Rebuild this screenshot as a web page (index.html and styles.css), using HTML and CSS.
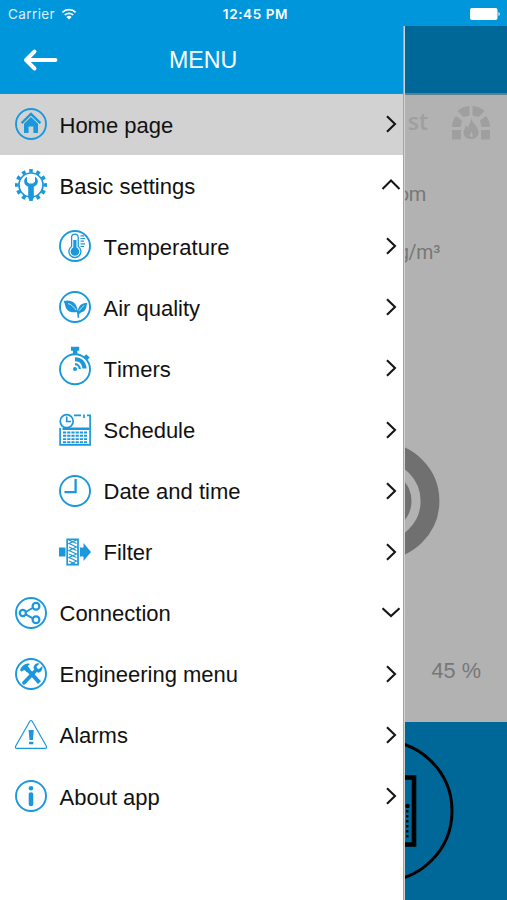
FILE: index.html
```html
<!DOCTYPE html>
<html lang="en">
<head>
<meta charset="utf-8">
<title>Menu</title>
<link rel="stylesheet" href="styles.css">
</head>
<body>
<svg class="defs" width="0" height="0">
  <symbol id="right" viewBox="0 0 20 20"><path d="M6 2.200 14 10 6 17.800"/></symbol>
  <symbol id="up" viewBox="0 0 20 20"><path d="M1.500 14 10 5.500 18.500 14"/></symbol>
  <symbol id="down" viewBox="0 0 20 20"><path d="M1.500 5.300 10 13 18.500 5.300"/></symbol>
</svg>
<header class="status">
  <span class="carrier">Carrier
    <svg width="16" height="12" viewBox="0 0 16 12"><path d="M1.400 4.400a9.400 9.400 0 0 1 13.200 0M3.800 7a6 6 0 0 1 8.400 0" fill="none" stroke="#fff" stroke-width="1.700"/><path d="M8 11.600 5.400 8.900a3.800 3.800 0 0 1 5.200 0z" fill="#fff"/></svg>
  </span>
  <span class="clock">12:45 PM</span>
  <svg class="battery" width="31" height="12" viewBox="0 0 31 12"><rect width="27.500" height="12" rx="2" fill="#fff"/><path d="M28.500 4a2.200 2.200 0 0 1 0 4z" fill="#fff"/></svg>
</header>
<div class="screen">
  <nav class="drawer">
    <div class="title">
      <svg class="back" width="36" height="24" viewBox="0 0 36 24"><path d="M11.500 3.500 3 12l8.500 8.500M3.500 12H32.500" fill="none" stroke="#fff" stroke-width="3.900" stroke-linecap="round" stroke-linejoin="round"/></svg>
      <h1>MENU</h1>
    </div>
    <ul class="menu">
      <li class="item active">
        <svg class="icon" viewBox="0 0 34 34"><circle class="ring" cx="17" cy="17" r="15"/><path class="line" d="m7.600 16.200 9.400-9.300 9.400 9.300" stroke-width="2.400"/><path class="solid" d="M10 16.800 17 10l7 6.800V26h-4.600v-6.400h-4.800V26H10z"/></svg>
        <span>Home page</span><svg class="arrow"><use href="#right"/></svg>
      </li>
      <li class="item">
        <svg class="icon" viewBox="0 0 34 34"><circle class="line" cx="17" cy="17" r="12" stroke-width="1.700"/><circle class="line" cx="17" cy="17" r="14.200" stroke-width="3.600" pathLength="120" stroke-dasharray="5 5" stroke-dashoffset="2.500"/><path class="solid" d="M13 8.800v5l2.200 1.800h3.600l2.200-1.800v-5c2.200 1.100 2.800 2.900 2.800 4.700 0 2.400-1.500 4.200-4 5.300v10.200a2.800 2.800 0 0 1-5.600 0V18.800c-2.500-1.100-4-2.900-4-5.300 0-1.800.6-3.600 2.800-4.700z"/></svg>
        <span>Basic settings</span><svg class="arrow"><use href="#up"/></svg>
      </li>
      <li class="item sub">
        <svg class="icon" viewBox="0 0 34 34"><circle class="ring" cx="17" cy="17" r="15"/><path class="line" d="M13.600 17.500V8.500a3.300 3.300 0 0 1 6.600 0v9a6 6 0 1 1-6.600 0z" stroke-width="1.300"/><circle class="solid" cx="16.900" cy="22.500" r="4.300"/><path class="solid" d="M15.300 11h3.200v10h-3.200z"/><path class="line" d="M22.500 6.800H26M22.500 9.500h4.500M22.500 12.200H26M22.500 14.900h4.500M22.500 17.500H26" stroke-width="1.200"/></svg>
        <span>Temperature</span><svg class="arrow"><use href="#right"/></svg>
      </li>
      <li class="item sub">
        <svg class="icon" viewBox="0 0 34 34"><circle class="ring" cx="17" cy="17" r="15"/><path class="solid" d="M5.500 11c7-2 14.200 1.400 14.200 11-6.700 1.300-11.200-1-12.400-6-.4-1.700-.8-3.500-1.800-5zM29.500 12.800c-1 1.800-.8 3.400-1.500 5.400-1 3.200-4 4.900-8 4.300-.2-6.200 3-9.700 9.500-9.700z"/><path class="line" d="M19 20.500c1 1.500 1.300 3.700 1.300 7.300M20.300 24l3.500-3.500" stroke-width="1.600"/><path d="M10 13.500c3.500 1 6 3.500 8.200 6.700M25.800 15.400 21 20.800" fill="none" stroke="#fff" stroke-width=".7"/></svg>
        <span>Air quality</span><svg class="arrow"><use href="#right"/></svg>
      </li>
      <li class="item sub">
        <svg class="icon tall" viewBox="0 0 34 40"><circle class="ring" cx="17" cy="23.200" r="15"/><path class="solid" d="M13 .8h8.200v4h-1.900v4h-4.400v-4H13z"/><path class="line" d="m27 9.500 3.500 3.300" stroke-width="3.500"/><circle class="solid" cx="17" cy="23" r="2"/><path class="line" d="M17 18.200a5 5 0 0 1 4.800 4.800" stroke-width="2.200"/><path class="solid" d="M17 11.200c6.500 0 11.300 4.500 11.600 11.300h-4.300c0-4.500-2.800-7.300-7.300-7.300z"/></svg>
        <span>Timers</span><svg class="arrow"><use href="#right"/></svg>
      </li>
      <li class="item sub">
        <svg class="icon" viewBox="0 0 34 34"><circle class="line" cx="8.700" cy="8.200" r="6.500" stroke-width="1.700"/><path class="line" d="M8.700 3.500v5H13M16 2.300h7M26 1.500v3.600M29 2.300h3.100v29.500H2.100V15" stroke-width="1.700"/><path class="solid" d="M4.500 14.500h27V17h-27z"/><path class="line" d="M5 19.500h24M5 22.800h24M5 26.100h24M5 29.200h24" stroke-width="1.900" stroke-dasharray="3.200 1"/></svg>
        <span>Schedule</span><svg class="arrow"><use href="#right"/></svg>
      </li>
      <li class="item sub">
        <svg class="icon" viewBox="0 0 34 34"><circle class="ring" cx="17" cy="17" r="15"/><path class="line" d="M17.600 5v13.200H6.500" stroke-width="2.300"/></svg>
        <span>Date and time</span><svg class="arrow"><use href="#right"/></svg>
      </li>
      <li class="item sub">
        <svg class="icon" viewBox="0 0 34 34"><path class="solid" d="M1 12.500h6.500v9H1zM22 12.500h3.500v-4.500l7.500 9-7.500 9v-4.500H22z"/><path class="line" d="M9.200 4.300h10.800v25.400H9.200z" stroke-width="1.700"/><path class="line" d="m18.500 5-7.500 3.500 7.500 3.500-7.500 3.500 7.500 3.500-7.500 3.500 7.500 3.500-5.500 3M11 5l7.500 3.500M11 12l7.500 3.500M11 19l7.500 3.500M11 26l6 3" stroke-width="1.200"/></svg>
        <span>Filter</span><svg class="arrow"><use href="#right"/></svg>
      </li>
      <li class="item">
        <svg class="icon" viewBox="0 0 34 34"><circle class="ring" cx="17" cy="17" r="15"/><path class="line" d="m11.500 16 8-4.500M11.500 18.300l8 4.300" stroke-width="1.900"/><g class="line" stroke-width="2.200"><circle cx="8.800" cy="17" r="3.100"/><circle cx="22" cy="10.200" r="3.400"/><circle cx="22" cy="23.800" r="3.400"/></g></svg>
        <span>Connection</span><svg class="arrow"><use href="#down"/></svg>
      </li>
      <li class="item">
        <svg class="icon" viewBox="0 0 34 34"><circle class="ring" cx="17" cy="17" r="15"/><path class="line" d="m13.500 12.500 12 13.200" stroke-width="4"/><path class="solid" d="M7.300 14.600 6 12.900c1.800-3.700 4.500-6.400 9-6.300l.8.900c-1.800.5-2.100 1.400-1 3l1.500 2-3.400 3-2-2.200c-1.100-.5-2 .2-3.600 1.300z"/><path class="line" d="m10 25.800 12-12.600" stroke-width="3.800" stroke-linecap="round"/><path class="solid" d="M25.500 6.400 22.600 9.500l.5 2 2 .5 3.100-2.900c1 2.800-.8 6.300-4.200 6.700l-4.600-4.600c.2-3.800 3.200-5.800 6.100-4.800z"/></svg>
        <span>Engineering menu</span><svg class="arrow"><use href="#right"/></svg>
      </li>
      <li class="item">
        <svg class="icon" viewBox="0 0 34 34"><path class="line" d="M15.800 3.300q1.200-1.600 2.400 0l14.200 25q.8 2-1.300 2H2.900q-2.100 0-1.300-2z" stroke-width="1.200"/><path class="solid" d="M14.600 12h5.200l-.9 10h-3.400zM15 23.700h4.400v2.500H15z"/></svg>
        <span>Alarms</span><svg class="arrow"><use href="#right"/></svg>
      </li>
      <li class="item">
        <svg class="icon" viewBox="0 0 34 34"><circle class="ring" cx="17" cy="17" r="15"/><circle class="solid" cx="17" cy="9.300" r="2.300"/><path class="line" d="M17 15.500v9.500" stroke-width="4.600" stroke-linecap="round"/></svg>
        <span>About app</span><svg class="arrow"><use href="#right"/></svg>
      </li>
    </ul>
  </nav>
  <main class="page">
    <div class="pagebar"></div>
    <div class="row boost"><span>st</span>
      <svg width="38" height="34" viewBox="0 0 38 34" fill="#9f9f9f"><path d="M17.500 0v9.500L11.500 11 5.500 5Q10 .5 17.500 0zM20.500 0q7.500.5 12 5l-6 6-6-1.500zM4 10l6 4.500L8.500 21H0q0-6 4-11zM34 10l-6 4.500 1.500 6.500H38q0-6-4-11zM0 24h9v9.500H0zM29 24h9v9.500h-9z"/><path d="M19 12c1 5 7.500 8 7.500 14.500 0 4-3 6.500-7.500 6.500s-7.500-2.500-7.500-6.500c0-3 2-4 2-7l3 2c0-3 2.500-5 2.500-9.500z"/><path d="M19.200 25c0 2 1.500 3 1.500 4.700s-3 1.500-3 0c0-1.700 1.500-2.700 1.500-4.700z" fill="#b2b2b2"/></svg>
    </div>
    <div class="row co2">om</div>
    <div class="row humid">g/m³</div>
    <div class="dial"><svg width="118" height="118" viewBox="0 0 118 118"><circle cx="59" cy="59" r="49" fill="none" stroke="#707070" stroke-width="18.800"/><circle cx="59" cy="59" r="30.500" fill="#707070"/></svg></div>
    <div class="row level">45 %</div>
    <footer class="tools"><svg width="144" height="144" viewBox="0 0 144 144"><g fill="none" stroke="#000"><circle cx="72" cy="72" r="70" stroke-width="3"/><path d="M40 38.500h64v67H40z" stroke-width="4.600"/><path d="M97.300 71v30" stroke-width="2.200" stroke-dasharray="2.500 2.500"/></g><circle cx="97.500" cy="67" r="2.200"/></svg></footer>
  </main>
</div>
</body>
</html>
```
FILE: styles.css
```css
* { box-sizing: border-box; }
body {
  margin: 0;
  width: 507px;
  height: 900px;
  overflow: hidden;
  font-family: "Liberation Sans", Arial, sans-serif;
  font-size: 22px;
  font-kerning: none;
  color: #111;
  background: #fff;
}
.defs { display: block; }
svg { flex: none; }
.status {
  height: 26px;
  padding: 2px 6px 0 8px;
  display: grid;
  grid-template-columns: 1fr auto 1fr;
  align-items: center;
  background: #0096dc;
  color: #fff;
  font: 13.5px/24px Inter, sans-serif;
}
.carrier { display: flex; align-items: center; gap: 6px; color: #d9f0fb; letter-spacing: .4px; }
.clock { padding-left: 2px; font-weight: 600; letter-spacing: .6px; font-size: 13.5px; }
.battery { justify-self: end; }
.screen { display: flex; height: 874px; }
.drawer {
  width: 405px;
  flex: none;
  padding-right: 1px;
  border-right: 1px solid #d3d3d3;
  background: #a3a3a3;
}
.title {
  height: 68px;
  display: flex;
  align-items: center;
  padding-left: 23px;
  background: #0096dc;
  color: #fff;
}
.title h1 { margin: 0 0 0 110px; font-size: 23.2px; font-weight: 400; line-height: 30px; }
.menu { list-style: none; margin: 0; padding: 0; height: 806px; background: #fff; }
.item {
  height: 61.1px;
  display: flex;
  align-items: center;
  gap: 11.5px;
  padding: 0 2px 0 14px;
}
.item.sub { padding-left: 58px; }
.item.active { background: #d2d2d2; }
.item span { flex: 1; line-height: 26px; padding-top: 2px; }
.icon { width: 34px; height: 34px; margin-top: -1px; }
.icon.tall { height: 40px; margin-top: -6px; }
.ring { fill: #fff; stroke: #1b98db; stroke-width: 1.9; }
.active .ring { fill: none; }
.line { fill: none; stroke: #1b98db; }
.solid { fill: #1b98db; }
.arrow { width: 20px; height: 20px; margin-top: -1px; fill: none; stroke: #151515; stroke-width: 2.1; }
.page {
  flex: 1;
  min-width: 0;
  overflow: hidden;
  display: flex;
  flex-direction: column;
  background: #b2b2b2;
  color: #777;
}
.pagebar { height: 69px; flex: none; background: #006799; border-bottom: 2px solid #5d7f8f; }
.row { display: flex; justify-content: flex-end; align-items: center; flex: none; }
.boost { height: 55px; padding-right: 17px; gap: 24px; color: #9f9f9f; font: 600 23px "Open Sans", sans-serif; }
.boost span { margin-top: -3px; }
.co2 { height: 87px; padding-right: 81px; font: 20px Roboto, sans-serif; letter-spacing: -.4px; }
.humid { height: 30px; padding-right: 67px; font: 19.5px Roboto, sans-serif; letter-spacing: -.3px; }
.dial { display: flex; flex: none; justify-content: flex-end; height: 118px; margin-top: 175px; padding-right: 67px; }
.level { height: 30px; margin-top: 96px; padding-right: 26px; font-size: 21.7px; }
.tools { height: 178px; flex: none; margin-top: auto; display: flex; align-items: center; justify-content: flex-end; padding-right: 53px; background: #006799; }
```
